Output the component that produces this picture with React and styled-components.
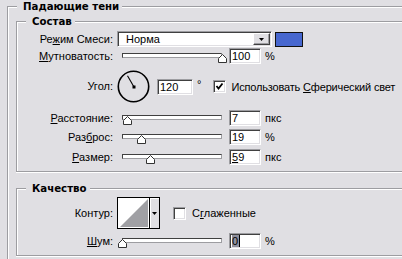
import React from "react";
import styled, { createGlobalStyle } from "styled-components";

const FACE = "#e0dfe3";
const SHADOW = "#9d9da1";
const DARK = "#404040";

const Global = createGlobalStyle`
  html, body { margin: 0; padding: 0; background: ${FACE}; }
  body {
    font-family: "Liberation Sans", Arial, sans-serif;
    font-size: 11px;
    color: #000;
  }
  #root { width: 402px; height: 259px; overflow: hidden; }
  * { box-sizing: border-box; }
`;

const Page = styled.div`
  width: 402px;
  height: 259px;
  overflow: hidden;
  padding: 6px 0 0 7px;
`;

const Group = styled.section`
  border-top: 1px solid ${SHADOW};
  border-left: 1px solid ${SHADOW};
  border-bottom: ${(p) => (p.$closed ? `1px solid ${SHADOW}` : "none")};
  box-shadow: inset 1px 1px 0 #fff${(p) => (p.$closed ? ", 0 1px 0 #fff" : "")};
  margin: ${(p) => p.$margin || "0"};
  padding-bottom: ${(p) => p.$pb || 0}px;
`;

const Head = styled.div`
  display: flex;
  height: 13px;
  margin-top: -7px;
`;

const Title = styled.span`
  margin-left: 9px;
  padding: 0 3px 0 6px;
  background: ${FACE};
  font-family: "DejaVu Sans", Verdana, sans-serif;
  font-weight: bold;
  font-size: 10.2px;
  line-height: 13px;
  white-space: nowrap;
`;

const Row = styled.div`
  display: flex;
  align-items: center;
  height: ${(p) => p.$h}px;
  margin-top: ${(p) => p.$mt}px;
`;

const Label = styled.span`
  flex: none;
  width: 96px;
  margin-right: 4px;
  text-align: right;
  white-space: nowrap;
  line-height: 13px;
`;

const sunken = `
  border: 1px solid;
  border-color: ${SHADOW} #fff #fff ${SHADOW};
  box-shadow: inset 1px 1px 0 ${DARK}, inset -1px -1px 0 ${FACE};
`;

const Select = styled.div`
  flex: none;
  display: flex;
  width: 155px;
  height: 16px;
  padding: 1px;
  background: #fff;
  ${sunken}
`;

const SelectText = styled.span`
  flex: 1;
  padding-left: 7px;
  line-height: 13px;
`;

const DropButton = styled.span`
  flex: none;
  display: flex;
  align-items: center;
  justify-content: center;
  width: 17px;
  height: 12px;
  background: ${FACE};
  border: 1px solid;
  border-color: #fff ${DARK} ${DARK} #fff;
  box-shadow: inset -1px -1px 0 ${SHADOW};
`;

const Swatch = styled.span`
  flex: none;
  width: 28px;
  height: 15px;
  margin-left: 3px;
  background: #4767cf;
  border: 1px solid #111;
`;

const Slider = styled.div`
  position: relative;
  flex: none;
  width: 108px;
  height: 16px;
  padding: 5px 0 0 5px;
`;

const Track = styled.div`
  width: 100px;
  height: 5px;
  background: #fff;
  border: 1px solid;
  border-color: ${DARK} ${SHADOW} ${SHADOW} ${DARK};
`;

const Thumb = styled.svg`
  position: absolute;
  top: 6px;
  width: 9px;
  height: 9px;
`;

const Field = styled.div`
  flex: none;
  width: ${(p) => p.$w || 32}px;
  height: 16px;
  margin-left: ${(p) => p.$ml ?? 4}px;
  padding-left: 2px;
  background: #fff;
  line-height: 14px;
  white-space: nowrap;
  ${sunken}
`;

const Unit = styled.span`
  margin-left: 4px;
  white-space: nowrap;
`;

const Degree = styled.span`
  margin-left: 4px;
  align-self: flex-start;
  margin-top: 8px;
`;

const Box = styled.span`
  flex: none;
  display: flex;
  align-items: center;
  justify-content: center;
  width: 13px;
  height: 13px;
  margin-left: ${(p) => p.$ml}px;
  background: #fff;
  ${sunken}
`;

const CheckText = styled.span`
  margin-left: ${(p) => p.$ml}px;
  white-space: nowrap;
  letter-spacing: ${(p) => p.$ls || 0}px;
`;

const Dial = styled.svg`
  flex: none;
  width: 33px;
  height: 33px;
`;

const Contour = styled.div`
  flex: none;
  display: flex;
  width: 43px;
  height: 32px;
  border: 1px solid #000;
  background: #fff;
`;

const Curve = styled.svg`
  flex: 1;
  height: 30px;
`;

const ContourArrow = styled.span`
  flex: none;
  display: flex;
  align-items: center;
  justify-content: center;
  width: 10px;
  background: ${FACE};
  border-left: 1px solid #000;
  box-shadow: inset 1px 1px 0 #fff;
`;

const Selected = styled.span`
  background: #8f8f9c;
  border-right: 1px solid #000;
  padding-right: 1px;
`;

const Arrow = () => (
  <svg width="5" height="3" viewBox="0 0 5 3">
    <polygon points="0,0 5,0 2.5,3" fill="#000" />
  </svg>
);

const CheckMark = () => (
  <svg width="9" height="9" viewBox="0 0 9 9">
    <polyline points="1.5,4 3.5,6.5 7.5,1.5" fill="none" stroke="#000" strokeWidth="1.8" />
  </svg>
);

const SliderControl = ({ pct }) => (
  <Slider>
    <Track />
    <Thumb viewBox="0 0 9 9" style={{ left: 5 + pct - 4.5 }}>
      <path d="M0.5 8.5 V4.5 L4.5 0.5 L8.5 4.5 V8.5 Z" fill="#fff" stroke="#333" />
    </Thumb>
  </Slider>
);

const SliderRow = ({ mt, label, pct, value, unit }) => (
  <Row $h={16} $mt={mt}>
    <Label>{label}</Label>
    <SliderControl pct={pct} />
    <Field $ml={4}>{value}</Field>
    <Unit>{unit}</Unit>
  </Row>
);

const angle = (120 * Math.PI) / 180;

export default function App() {
  return (
    <>
      <Global />
      <Page>
        <Group $pb={20}>
          <Head>
            <Title>Падающие тени</Title>
          </Head>

          <Group $closed $margin="8px 0 0 8px" $pb={6}>
            <Head>
              <Title>Состав</Title>
            </Head>
            <Row $h={16} $mt={3}>
              <Label>
                Ре<u>ж</u>им Смеси:
              </Label>
              <Select>
                <SelectText>Норма</SelectText>
                <DropButton>
                  <Arrow />
                </DropButton>
              </Select>
              <Swatch />
            </Row>
            <SliderRow
              mt={1}
              label={<><u>М</u>утноватость:</>}
              pct={100}
              value="100"
              unit="%"
            />
            <Row $h={33} $mt={6}>
              <Label>Угол:</Label>
              <Dial viewBox="0 0 33 33">
                <circle cx="16.5" cy="16.5" r="15.2" fill="none" stroke="#000" strokeWidth="1.6" />
                <line
                  x1="17"
                  y1="17"
                  x2={17 + 13 * Math.cos(angle)}
                  y2={17 - 13 * Math.sin(angle)}
                  stroke="#000"
                  strokeWidth="1.1"
                />
                <rect x="15.5" y="15.5" width="3" height="3" fill="#000" />
              </Dial>
              <Field $w={36} $ml={7}>120</Field>
              <Degree>°</Degree>
              <Box $ml={12}>
                <CheckMark />
              </Box>
              <CheckText $ml={5} $ls={-0.17}>
                Использовать <u>С</u>ферический свет
              </CheckText>
            </Row>
            <SliderRow
              mt={7}
              label={<><u>Р</u>асстояние:</>}
              pct={5.5}
              value="7"
              unit="пкс"
            />
            <SliderRow
              mt={3}
              label={<>Раз<u>б</u>рос:</>}
              pct={19}
              value="19"
              unit="%"
            />
            <SliderRow
              mt={4}
              label={<><u>Р</u>азмер:</>}
              pct={28}
              value={<><u>5</u>9</>}
              unit="пкс"
            />
          </Group>

          <Group $closed $margin="16px 0 0 8px" $pb={6}>
            <Head>
              <Title>Качество</Title>
            </Head>
            <Row $h={32} $mt={2}>
              <Label>Контур:</Label>
              <Contour>
                <Curve viewBox="0 0 31 30" preserveAspectRatio="none">
                  <polygon points="2,29 30,1 30,29" fill="#a0a0a4" />
                </Curve>
                <ContourArrow>
                  <Arrow />
                </ContourArrow>
              </Contour>
              <Box $ml={13} />
              <CheckText $ml={6}>
                С<u>г</u>лаженные
              </CheckText>
            </Row>
            <Row $h={16} $mt={4}>
              <Label>
                <u>Ш</u>ум:
              </Label>
              <SliderControl pct={0} />
              <Field $ml={4}>
                <Selected>0</Selected>
              </Field>
              <Unit>%</Unit>
            </Row>
          </Group>
        </Group>
      </Page>
    </>
  );
}
